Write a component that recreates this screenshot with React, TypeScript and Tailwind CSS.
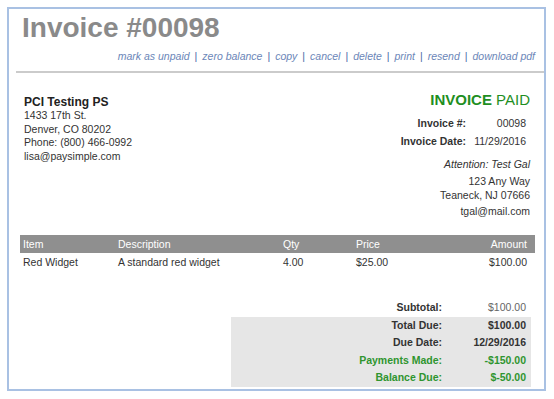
const links = ["mark as unpaid", "zero balance", "copy", "cancel", "delete", "print", "resend", "download pdf"]

const totals = [
  { label: "Total Due:", value: "$100.00", green: false },
  { label: "Due Date:", value: "12/29/2016", green: false },
  { label: "Payments Made:", value: "-$150.00", green: true },
  { label: "Balance Due:", value: "$-50.00", green: true },
]

export default function App() {
  return (
    <div className="w-[554px] h-[399px] bg-white pt-[7px] pl-[7px] font-['Liberation_Sans',Arial,sans-serif] text-[10.5px] text-[#333]">
      <div className="w-[539px] h-[384px] border-2 border-[#a9c1e3]">
        <h1 className="pl-[13px] pt-[4px] text-[28px] leading-[30px] font-bold text-[#8a8a8a]">Invoice #00098</h1>

        <div className="mt-[6px] pr-[9px] flex justify-end leading-[14px]">
          {links.map((l, i) => (
            <span key={l} className="flex">
              {i > 0 && <span className="px-[5px] text-[#4a69a8]">|</span>}
              <span className="italic text-[#6b86b8]">{l}</span>
            </span>
          ))}
        </div>

        <div className="mt-[8px] ml-[7px] h-[2px] bg-[#cbcbcb]" />

        {/* bill from / invoice info */}
        <div className="flex justify-between pt-[18px] pl-[15px] pr-[14px]">
          <div className="pt-[4px]">
            <div className="text-[12px] leading-[14px] font-bold text-[#222]">PCI Testing PS</div>
            <div className="leading-[13.5px]">
              <div>1433 17th St.</div>
              <div>Denver, CO 80202</div>
              <div>Phone: (800) 466-0992</div>
              <div>lisa@paysimple.com</div>
            </div>
          </div>
          <div className="flex flex-col items-end">
            <div className="text-[15px] leading-[18px] text-[#1f8f1f]">
              <span className="font-bold">INVOICE</span> PAID
            </div>
            <div className="mt-[5px] mr-[4px] grid grid-cols-[auto_60px] leading-[18px]">
              <span className="text-right font-bold">Invoice #:</span>
              <span className="text-right">00098</span>
              <span className="text-right font-bold">Invoice Date:</span>
              <span className="text-right">11/29/2016</span>
            </div>
            <div className="mt-[7px] italic leading-[14px]">Attention: Test Gal</div>
            <div className="mt-[3px] text-right leading-[14px]">
              <div>123 Any Way</div>
              <div>Teaneck, NJ 07666</div>
              <div className="mt-[2px]">tgal@mail.com</div>
            </div>
          </div>
        </div>

        {/* line items */}
        <div className="mt-[17px] ml-[11px] mr-[9px]">
          <div className="grid grid-cols-[95px_165px_73px_1fr_auto] pl-[3px] pr-[8px] h-[18px] leading-[18px] bg-[#8f8f8f] text-white">
            <span>Item</span>
            <span>Description</span>
            <span>Qty</span>
            <span>Price</span>
            <span className="text-right">Amount</span>
          </div>
          <div className="grid grid-cols-[95px_165px_73px_1fr_auto] pl-[3px] pr-[8px] leading-[18px]">
            <span>Red Widget</span>
            <span>A standard red widget</span>
            <span>4.00</span>
            <span>$25.00</span>
            <span className="text-right">$100.00</span>
          </div>
        </div>

        {/* totals */}
        <div className="mt-[28px] ml-[222px] w-[300px]">
          <div className="grid grid-cols-[1fr_84px] leading-[17.5px]">
            <span className="text-right pr-[5px] font-bold">Subtotal:</span>
            <span className="text-right pr-[5px] text-[#666]">$100.00</span>
          </div>
          <div className="bg-[#e6e6e6] grid grid-cols-[1fr_84px] leading-[17.5px] font-bold">
            {totals.map((t) => (
              <div key={t.label} className={`contents ${t.green ? "text-[#2f952f]" : ""}`}>
                <span className="text-right pr-[5px]">{t.label}</span>
                <span className="text-right pr-[5px]">{t.value}</span>
              </div>
            ))}
          </div>
        </div>
      </div>
    </div>
  )
}
